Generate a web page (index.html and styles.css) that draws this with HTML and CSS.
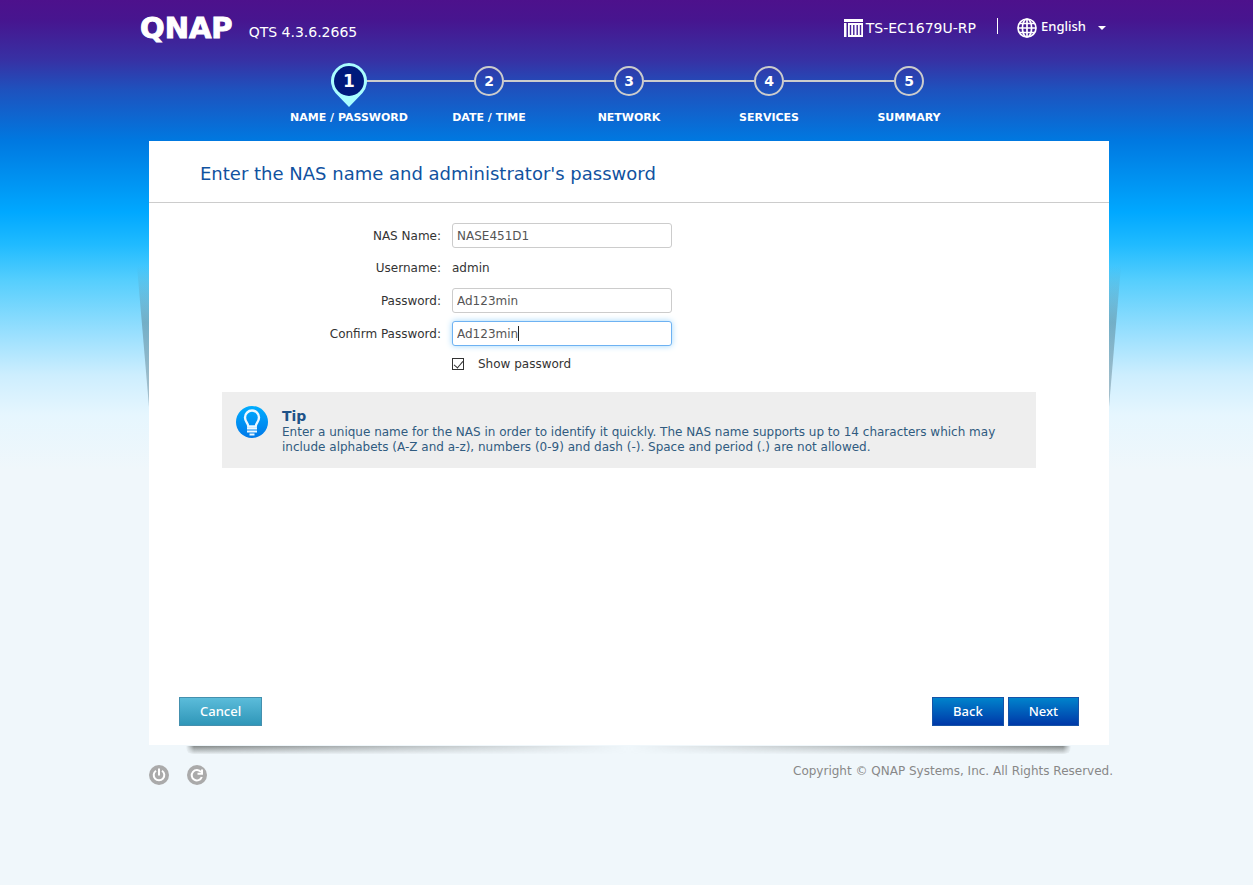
FILE: index.html
```html
<!DOCTYPE html>
<html lang="en">
<head>
<meta charset="utf-8">
<meta name="viewport" content="width=device-width, initial-scale=1">
<title>QNAP QTS Setup</title>
<link rel="stylesheet" href="styles.css">
</head>
<body>
<div class="page">
  <header class="topbar">
    <span class="logo">QNAP</span>
    <span class="version">QTS 4.3.6.2665</span>
    <div class="device">
      <svg width="20" height="20" viewBox="0 0 20 20" aria-hidden="true">
        <path d="M0 1h19v3H0zM0 5h2.500v14H0zM4 5h15v14H4z" fill="#fff"/>
        <path d="M6.500 7v10M9.800 7v10M13.200 7v10M16.500 7v10" stroke="#44209a" stroke-width="1.400"/>
      </svg>
      <span>TS-EC1679U-RP</span>
    </div>
    <div class="language">
      <svg width="20" height="20" viewBox="0 0 20 20" fill="none" stroke="#fff" stroke-width="1.700" aria-hidden="true">
        <circle cx="10" cy="10" r="9"/>
        <ellipse cx="10" cy="10" rx="4.600" ry="9"/>
        <path d="M10 1v18M1 10h18M2.500 5.500h15M2.500 14.500h15"/>
      </svg>
      <select class="language-select" aria-label="Language"><option>English</option></select>
      <span class="caret"></span>
    </div>
  </header>

  <ol class="steps">
    <li class="step step-current">
      <span class="marker">
        <svg class="pin" width="36" height="44" viewBox="0 0 36 44" aria-hidden="true">
          <path d="M18 0a18 18 0 0 1 13.500 29.900L18 44 4.500 29.900A18 18 0 0 1 18 0z" fill="#a9fdff"/>
          <circle cx="18" cy="18" r="15" fill="#001a7c"/>
        </svg>
        <span class="number">1</span>
      </span>
      <span class="step-name">NAME / PASSWORD</span>
    </li>
    <li class="step"><span class="marker"><span class="number">2</span></span><span class="step-name">DATE / TIME</span></li>
    <li class="step"><span class="marker"><span class="number">3</span></span><span class="step-name">NETWORK</span></li>
    <li class="step"><span class="marker"><span class="number">4</span></span><span class="step-name">SERVICES</span></li>
    <li class="step"><span class="marker"><span class="number">5</span></span><span class="step-name">SUMMARY</span></li>
  </ol>

  <main class="panel">
    <h1 class="title">Enter the NAS name and administrator's password</h1>
    <form class="body">
      <div class="fields">
        <label for="nas">NAS Name:</label>
        <input class="text" id="nas" type="text" value="NASE451D1">
        <span class="label">Username:</span>
        <span>admin</span>
        <label for="pw">Password:</label>
        <input class="text" id="pw" type="text" value="Ad123min">
        <label for="pw2">Confirm Password:</label>
        <div class="focus-box">
          <input class="text text-focus" id="pw2" type="text" value="Ad123min">
          <span class="cursor"></span>
        </div>
        <div class="show">
          <input class="check" id="show" type="checkbox" checked>
          <label for="show">Show password</label>
        </div>
      </div>
      <section class="tip">
        <svg class="tip-icon" width="32" height="32" viewBox="0 0 32 32" aria-hidden="true">
          <defs><linearGradient id="blue" x2="0" y2="1"><stop stop-color="#00adff"/><stop offset="1" stop-color="#0078e8"/></linearGradient></defs>
          <circle cx="16" cy="16" r="16" fill="url(#blue)"/>
          <path d="M12.300 20.500c0-3.500-3.300-4.500-3.300-9a7 7 0 0 1 14 0c0 4.500-3.300 5.500-3.300 9z" fill="none" stroke="#edf8ff" stroke-width="2.400"/>
          <path d="M11 22.500h10M11 25.500h10M13.500 28.500h5" stroke="#edf8ff" stroke-width="2"/>
        </svg>
        <div>
          <h2 class="tip-title">Tip</h2>
          <p class="tip-text">Enter a unique name for the NAS in order to identify it quickly. The NAS name supports up to 14 characters which may include alphabets (A-Z and a-z), numbers (0-9) and dash (-). Space and period (.) are not allowed.</p>
        </div>
      </section>
      <div class="actions">
        <button class="btn btn-cancel" type="button">Cancel</button>
        <button class="btn" type="button">Back</button>
        <button class="btn" type="button">Next</button>
      </div>
    </form>
  </main>

  <footer class="footer">
    <button class="round" type="button" aria-label="Shut down">
      <svg width="20" height="20" viewBox="0 0 20 20" fill="none" stroke="#fff" stroke-width="2">
        <circle cx="10" cy="10" r="10" fill="#aaa" stroke="none"/>
        <path d="M7 5.700a5.300 5.300 0 1 0 6 0M10 3.500v7"/>
      </svg>
    </button>
    <button class="round" type="button" aria-label="Restart">
      <svg width="20" height="20" viewBox="0 0 20 20" fill="none" stroke="#fff" stroke-width="2">
        <circle cx="10" cy="10" r="10" fill="#aaa" stroke="none"/>
        <path d="M14 7a5.200 5.200 0 1 0 .8 5M15 4.500v4.300h-4.500"/>
      </svg>
    </button>
    <span class="copyright">Copyright © QNAP Systems, Inc. All Rights Reserved.</span>
  </footer>
</div>
</body>
</html>
```
FILE: styles.css
```css
* { box-sizing: border-box; }

body {
  margin: 0;
  min-height: 100vh;
  background: #f0f7fb linear-gradient(to bottom, #4d118c 0, #47158f 20px, #3731a4 60px, #1e52be 90px, #0078e0 140px, #00a8ff 212px, #20bbff 245px, #55cefd 280px, #9be0fe 335px, #cdeefe 375px, #e6f6fe 415px, #f0f7fb 470px) no-repeat;
  font: 12px/16px "DejaVu Sans", Verdana, sans-serif;
  color: #333;
}

.page {
  max-width: 973px;
  margin: 0 auto;
}

.topbar {
  display: flex;
  align-items: center;
  height: 56px;
  color: #fff;
  font-size: 14px;
}

.logo {
  font-size: 29px;
  font-weight: bold;
  line-height: 32px;
  -webkit-text-stroke: 1px #fff;
}

.version {
  padding-top: 8px;
  margin: 0 auto 0 16px;
}

.device,
.language {
  display: flex;
  align-items: center;
  gap: 4px;
}

.device {
  gap: 2px;
  padding-right: 21px;
}

.language {
  position: relative;
  padding: 0 6px 0 20px;
}

.language::before {
  content: "";
  position: absolute;
  left: 0;
  top: 1px;
  width: 1px;
  height: 16px;
  background: #fff;
}

.language-select {
  appearance: none;
  width: 66px;
  padding: 0 0 4px;
  border: 0;
  background: transparent;
  color: #fff;
  font: 500 13px/18px "Noto Sans", sans-serif;
}

.caret {
  position: absolute;
  right: 7px;
  top: 9px;
  border: 4px solid transparent;
  border-top-color: #fff;
  border-bottom: 0;
}

.steps {
  display: flex;
  justify-content: center;
  margin: 0;
  padding: 7px 0 0 5px;
  list-style: none;
  height: 85px;
  color: #fff;
  font-size: 11px;
  font-weight: bold;
}

.step {
  display: flex;
  flex-direction: column;
  align-items: center;
  gap: 11px;
  flex: 0 1 140px;
  position: relative;
  white-space: nowrap;
}

.step:not(:last-child)::after {
  content: "";
  position: absolute;
  top: 17px;
  left: calc(50% + 15px);
  width: calc(100% - 30px);
  height: 2px;
  background: #ccc;
}

.marker {
  display: grid;
  place-items: center;
  position: relative;
  width: 36px;
  height: 36px;
}

.marker::before {
  content: "";
  position: absolute;
  inset: 3px;
  border: 2px solid #ccc;
  border-radius: 50%;
}

.step-current .marker::before { display: none; }

.pin {
  position: absolute;
  left: 0;
  top: 0;
  z-index: 1;
}

.number {
  position: relative;
  z-index: 1;
  font-size: 14px;
}

.step-current .number { font-size: 17px; }

.panel {
  position: relative;
  display: flex;
  flex-direction: column;
  min-height: 604px;
  margin: 0 4px 0 9px;
  background: #fff;
}

.panel::before,
.panel::after,
.footer::before {
  content: "";
  position: absolute;
  pointer-events: none;
}

.panel::before,
.panel::after {
  top: 125px;
  width: 12px;
  height: 141px;
  background: linear-gradient(rgba(90, 120, 130, 0), rgba(90, 130, 145, 0.5) 40%, rgba(110, 140, 155, 0.5));
}

.panel::before {
  right: 100%;
  clip-path: polygon(0 0, 100% 0, 100% 100%);
}

.panel::after {
  left: 100%;
  clip-path: polygon(0 0, 100% 0, 0 100%);
}

.title {
  margin: 0;
  padding: 22px 51px 18px;
  border-bottom: 1px solid #ccc;
  color: #11529f;
  font-size: 18px;
  line-height: 21px;
  font-weight: normal;
}

.body {
  display: flex;
  flex: 1;
  flex-direction: column;
}

.fields {
  display: grid;
  grid-template-columns: 292px 220px;
  grid-template-rows: 25px 24px 25px 25px 24px;
  align-items: center;
  gap: 8px 11px;
  padding-top: 20px;
}

.fields > label,
.label { text-align: right; }

.text {
  display: block;
  width: 100%;
  height: 25px;
  padding: 0 4px;
  border: 1px solid #ccc;
  border-radius: 3px;
  background: #fff;
  color: #555;
  font: inherit;
  outline: 0;
}

.focus-box { position: relative; }

.text-focus {
  border-color: #6eb2f2;
  box-shadow: 0 0 6px #9fd6fb;
}

.cursor {
  position: absolute;
  left: 66px;
  top: 5px;
  width: 1px;
  height: 15px;
  background: #222;
}

.show {
  grid-column: 2;
  display: flex;
  align-items: center;
  gap: 14px;
  padding-bottom: 4px;
}

.check {
  appearance: none;
  position: relative;
  width: 12px;
  height: 12px;
  margin: 0;
  border: 1px solid #333;
  background: #fff;
}

.check:checked::after {
  content: "";
  position: absolute;
  left: 3px;
  top: 0;
  width: 4px;
  height: 8px;
  border: solid #333;
  border-width: 0 1px 1px 0;
  transform: rotate(40deg);
}

.tip {
  display: flex;
  gap: 14px;
  margin: 14px 73px 0;
  padding: 14px 32px 13px 14px;
  background: #eee;
  color: #305b80;
}

.tip-icon { flex: none; }

.tip-title {
  margin: 1px 0 0;
  color: #1e5288;
  font-size: 14px;
  line-height: 18px;
}

.tip-text {
  margin: 0;
  line-height: 15px;
}

.actions {
  display: flex;
  gap: 4px;
  margin-top: auto;
  padding: 0 30px 19px;
}

.btn {
  height: 29px;
  padding: 0 20px 2px;
  border: 1px solid #1553a8;
  background: linear-gradient(#0083cc, #0038a8);
  color: #fff;
  font: 500 13px/18px "Noto Sans", sans-serif;
}

.btn-cancel {
  margin-right: auto;
  border-color: #4490ae;
  background: linear-gradient(#5bbcda, #2f96b8);
}

.footer {
  position: relative;
  display: flex;
  gap: 18px;
  padding: 20px 0 0 9px;
}

.footer::before {
  left: 46px;
  right: 42px;
  top: 1px;
  height: 8px;
  border-radius: 0 0 6px 6px;
  background: linear-gradient(#858a8a, rgba(150, 155, 155, 0.1));
  -webkit-mask-image: linear-gradient(to right, transparent, #000 8px, transparent 50%, #000 calc(100% - 8px), transparent);
  mask-image: linear-gradient(to right, transparent, #000 8px, transparent 50%, #000 calc(100% - 8px), transparent);
}

.round {
  display: block;
  width: 20px;
  height: 20px;
  padding: 0;
  border: 0;
  background: transparent;
}

.round svg { display: block; }

.copyright {
  margin: -2px 0 0 auto;
  color: #888;
}
```
